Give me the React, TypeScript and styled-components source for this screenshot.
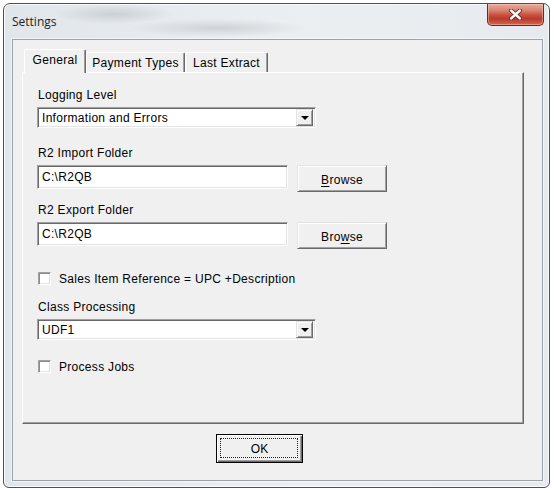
import React from "react";
import styled, { createGlobalStyle } from "styled-components";

const Global = createGlobalStyle`
  html, body { margin: 0; padding: 0; background: #ffffff; }
  body {
    font-family: "Liberation Sans", Arial, sans-serif;
    font-size: 12px;
    color: #000;
  }
  #root { width: 554px; height: 493px; }
`;

const Page = styled.div`
  width: 554px;
  height: 493px;
  box-sizing: border-box;
  padding: 3px 0 0 3px;
`;

const Window = styled.div`
  width: 547px;
  height: 485px;
  box-sizing: border-box;
  border: 1px solid #4b5159;
  border-radius: 7px 7px 6px 6px;
  background:
    radial-gradient(ellipse 60px 10px at 110px 10px, rgba(110, 118, 128, 0.22), rgba(110, 118, 128, 0) 100%),
    radial-gradient(ellipse 90px 9px at 215px 24px, rgba(110, 118, 128, 0.22), rgba(110, 118, 128, 0) 100%),
    linear-gradient(90deg, #e1e6eb 0%, #eceff2 55%, #e6eaee 100%);
  box-shadow: inset 0 0 0 1px rgba(255, 255, 255, 0.8);
  display: flex;
  flex-direction: column;
  overflow: hidden;
`;

const TitleBar = styled.div`
  height: 35px;
  flex: none;
  display: flex;
  justify-content: space-between;
  align-items: flex-start;
  padding: 0 5px 0 8px;
`;

const Title = styled.div`
  margin-top: 10px;
  font-family: "Open Sans", "Liberation Sans", sans-serif;
  font-size: 12px;
  line-height: 16px;
  color: #1e1e1e;
`;

const CloseButton = styled.div`
  width: 57px;
  height: 22px;
  box-sizing: border-box;
  border: 1px solid #6a2a21;
  border-top: none;
  border-radius: 0 0 5px 5px;
  background: linear-gradient(
    180deg,
    #e9ab9d 0%,
    #d98474 30%,
    #c9523f 52%,
    #b9392a 70%,
    #d0684f 100%
  );
  box-shadow: inset 0 0 0 1px rgba(255, 210, 200, 0.45);
  display: flex;
  align-items: center;
  justify-content: center;
`;

const Client = styled.div`
  flex: 1;
  margin: 0 6px 6px 8px;
  border: 1px solid #9aa2ab;
  box-shadow: 0 0 0 1px rgba(255, 255, 255, 0.55);
  background: #f0f0f0;
  padding: 9px 18px 0 9px;
  display: flex;
  flex-direction: column;
`;

const TabStrip = styled.div`
  height: 23px;
  display: flex;
  align-items: flex-end;
  padding-left: 2px;
`;

const Tab = styled.div<{ $active?: boolean; $w: number }>`
  position: relative;
  z-index: ${(p) => (p.$active ? 1 : 0)};
  width: ${(p) => p.$w}px;
  height: ${(p) => (p.$active ? 24 : 20)}px;
  margin-bottom: ${(p) => (p.$active ? -1 : 0)}px;
  box-sizing: border-box;
  border-top: 1px solid #ffffff;
  border-left: 1px solid #ffffff;
  border-right: 1px solid #696969;
  border-radius: 2px 2px 0 0;
  box-shadow: inset -1px 0 0 #a0a0a0;
  background: #f0f0f0;
  display: flex;
  align-items: center;
  justify-content: center;
  padding-bottom: ${(p) => (p.$active ? 3 : 0)}px;
  line-height: 14px;
  letter-spacing: 0.3px;
  white-space: nowrap;
`;

const Panel = styled.div`
  height: 352px;
  box-sizing: border-box;
  border: 1px solid;
  border-color: #ffffff #696969 #696969 #ffffff;
  box-shadow: inset -1px -1px 0 #a0a0a0;
  background: #f0f0f0;
  padding: 15px 0 0 14px;
  display: flex;
  flex-direction: column;
`;

const Field = styled.div<{ $mt: number }>`
  display: flex;
  flex-direction: column;
  gap: 5px;
  margin-top: ${(p) => p.$mt}px;
`;

const Label = styled.div`
  height: 14px;
  line-height: 14px;
  margin-left: 1px;
  letter-spacing: 0.3px;
  white-space: nowrap;
`;

const Sunken = styled.div<{ $w: number; $h: number }>`
  width: ${(p) => p.$w}px;
  height: ${(p) => p.$h}px;
  box-sizing: border-box;
  border: 1px solid;
  border-color: #a0a0a0 #ffffff #ffffff #a0a0a0;
  box-shadow: inset 1px 1px 0 #696969, inset -1px -1px 0 #e3e3e3;
  background: #ffffff;
  display: flex;
  align-items: center;
  padding: 1px 2px 1px 4px;
  line-height: 14px;
  letter-spacing: 0.3px;
  white-space: nowrap;
`;

const ComboText = styled.div`
  flex: 1;
`;

const DropButton = styled.div`
  width: 17px;
  height: 17px;
  box-sizing: border-box;
  border: 1px solid;
  border-color: #e3e3e3 #696969 #696969 #e3e3e3;
  box-shadow: inset 1px 1px 0 #ffffff, inset -1px -1px 0 #a0a0a0;
  background: #f0f0f0;
  display: flex;
  align-items: center;
  justify-content: center;
`;

const Arrow = styled.div`
  width: 0;
  height: 0;
  border-left: 4px solid transparent;
  border-right: 4px solid transparent;
  border-top: 4px solid #000;
  margin-top: 1px;
`;

const Row = styled.div`
  display: flex;
  align-items: flex-start;
  gap: 9px;
`;

const Button = styled.div<{ $w: number; $h: number }>`
  width: ${(p) => p.$w}px;
  height: ${(p) => p.$h}px;
  box-sizing: border-box;
  border: 1px solid;
  border-color: #e3e3e3 #696969 #696969 #e3e3e3;
  box-shadow: inset 1px 1px 0 #ffffff, inset -1px -1px 0 #a0a0a0;
  background: #f0f0f0;
  display: flex;
  align-items: center;
  justify-content: center;
  padding-top: 2px;
  line-height: 14px;
  letter-spacing: 0.3px;
`;

const Key = styled.span`
  text-decoration: underline;
  text-underline-offset: 2px;
`;

const CheckRow = styled.div<{ $mt: number }>`
  margin-top: ${(p) => p.$mt}px;
  height: 15px;
  display: flex;
  align-items: center;
  gap: 8px;
  padding-left: 1px;
  line-height: 14px;
  letter-spacing: 0.3px;
`;

const CheckBox = styled.div`
  width: 13px;
  height: 13px;
  box-sizing: border-box;
  border: 1px solid;
  border-color: #a0a0a0 #ffffff #ffffff #a0a0a0;
  box-shadow: inset 1px 1px 0 #8c8c8c, inset -1px -1px 0 #e3e3e3;
  background: #ffffff;
`;

const Footer = styled.div`
  display: flex;
  padding: 10px 0 0 194px;
`;

const OkButton = styled.div`
  position: relative;
  width: 87px;
  height: 29px;
  box-sizing: border-box;
  border: 1px solid #000;
  box-shadow: inset 1px 1px 0 #ffffff, inset -1px -1px 0 #696969, inset -2px -2px 0 #a0a0a0;
  background: #f0f0f0;
  display: flex;
  align-items: center;
  justify-content: center;
  line-height: 14px;
  &::after {
    content: "";
    position: absolute;
    left: 3px;
    top: 3px;
    right: 4px;
    bottom: 4px;
    border: 1px dotted #222;
  }
`;

const CloseIcon = () => (
  <svg width="13" height="11" viewBox="0 0 13 11">
    <path d="M2 1.5 L11 9.5 M11 1.5 L2 9.5" stroke="#5a1d14" strokeWidth="4" strokeLinecap="round" />
    <path d="M2 1.5 L11 9.5 M11 1.5 L2 9.5" stroke="#ffffff" strokeWidth="2.4" strokeLinecap="round" />
  </svg>
);

export default function App() {
  return (
    <>
      <Global />
      <Page>
        <Window>
          <TitleBar>
            <Title>Settings</Title>
            <CloseButton>
              <CloseIcon />
            </CloseButton>
          </TitleBar>
          <Client>
            <TabStrip>
              <Tab $active $w={62}>General</Tab>
              <Tab $w={99}>Payment Types</Tab>
              <Tab $w={83}>Last Extract</Tab>
            </TabStrip>
            <Panel>
              <Field $mt={0}>
                <Label>Logging Level</Label>
                <Sunken $w={279} $h={21}>
                  <ComboText>Information and Errors</ComboText>
                  <DropButton>
                    <Arrow />
                  </DropButton>
                </Sunken>
              </Field>
              <Field $mt={18}>
                <Label>R2 Import Folder</Label>
                <Row>
                  <Sunken $w={251} $h={24}>C:\R2QB</Sunken>
                  <Button $w={90} $h={27}>
                    <span>
                      <Key>B</Key>rowse
                    </span>
                  </Button>
                </Row>
              </Field>
              <Field $mt={11}>
                <Label>R2 Export Folder</Label>
                <Row>
                  <Sunken $w={251} $h={24}>C:\R2QB</Sunken>
                  <Button $w={90} $h={27}>
                    <span>
                      Bro<Key>w</Key>se
                    </span>
                  </Button>
                </Row>
              </Field>
              <CheckRow $mt={22}>
                <CheckBox />
                <span>Sales Item Reference = UPC +Description</span>
              </CheckRow>
              <Field $mt={14}>
                <Label>Class Processing</Label>
                <Sunken $w={279} $h={21}>
                  <ComboText>UDF1</ComboText>
                  <DropButton>
                    <Arrow />
                  </DropButton>
                </Sunken>
              </Field>
              <CheckRow $mt={19}>
                <CheckBox />
                <span>Process Jobs</span>
              </CheckRow>
            </Panel>
            <Footer>
              <OkButton>OK</OkButton>
            </Footer>
          </Client>
        </Window>
      </Page>
    </>
  );
}
